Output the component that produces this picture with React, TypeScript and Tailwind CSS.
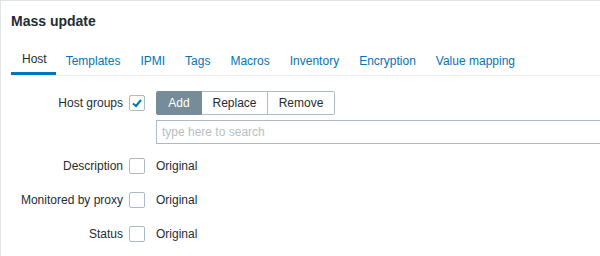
import React from 'react'

const tabs = ['Host', 'Templates', 'IPMI', 'Tags', 'Macros', 'Inventory', 'Encryption', 'Value mapping']

function Checkbox({ checked = false }: { checked?: boolean }) {
  return (
    <div className="w-[16px] h-[16px] border border-[#acbbc2] rounded-[2px] bg-white flex items-center justify-center">
      {checked && (
        <svg width="12" height="12" viewBox="0 0 12 12">
          <polyline points="2,6.5 5,9 10,3" fill="none" stroke="#0275b8" strokeWidth="2" />
        </svg>
      )}
    </div>
  )
}

function Row({ label, children }: { label: string; children: React.ReactNode }) {
  return (
    <div className="flex items-start">
      <div className="w-[122px] shrink-0 h-[24px] leading-[24px] text-right">{label}</div>
      <div className="ml-[6px] mt-[4px] shrink-0">
        <Checkbox checked={label === 'Host groups'} />
      </div>
      <div className="ml-[11px] shrink-0">{children}</div>
    </div>
  )
}

export default function App() {
  return (
    <div className="w-[600px] h-[256px] overflow-hidden bg-white border-l border-t border-[#dfe4e7] text-[12px] text-[#1f2c33] font-['Liberation_Sans',Arial,sans-serif]">
      {/* title */}
      <div className="h-[41px] flex items-center pl-[10px] text-[14px] font-bold">Mass update</div>

      {/* tabs */}
      <div className="mt-[4px] ml-[10px] flex border-b border-[#ebeef0]">
        {tabs.map((t, i) => (
          <div
            key={t}
            className={
              i === 0
                ? 'h-[29px] flex items-center pl-[11px] pr-[9px] border-b-[3px] border-[#0275b8] -mb-[1px] text-[#1f2c33]'
                : 'h-[29px] flex items-center px-[10px] text-[#0275b8]'
            }
          >
            {t}
          </div>
        ))}
      </div>

      {/* form */}
      <div className="pt-[15px] flex flex-col gap-[10px]">
        <Row label="Host groups">
          <div className="flex flex-col gap-[5px]">
            <div className="flex h-[24px]">
              <div className="w-[46px] flex items-center justify-center bg-[#768d99] border border-[#768d99] text-white rounded-l-[2px]">
                Add
              </div>
              <div className="w-[66px] flex items-center justify-center border-y border-r border-[#acbbc2]">
                Replace
              </div>
              <div className="w-[67px] flex items-center justify-center border-y border-r border-[#acbbc2] rounded-r-[2px]">
                Remove
              </div>
            </div>
            <div className="w-[470px] h-[24px] border border-[#acbbc2] flex items-center px-[5px] text-[#b6bfc4]">
              type here to search
            </div>
          </div>
        </Row>
        <Row label="Description">
          <div className="h-[24px] leading-[24px]">Original</div>
        </Row>
        <Row label="Monitored by proxy">
          <div className="h-[24px] leading-[24px]">Original</div>
        </Row>
        <Row label="Status">
          <div className="h-[24px] leading-[24px]">Original</div>
        </Row>
      </div>
    </div>
  )
}
